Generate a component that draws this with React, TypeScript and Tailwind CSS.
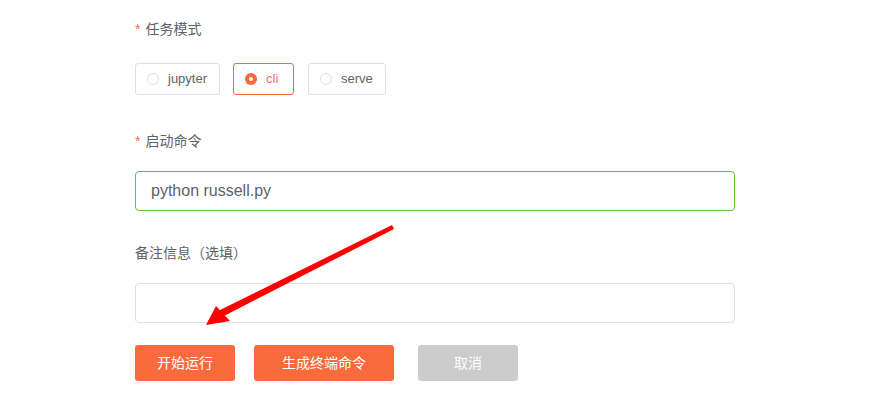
import React, { useState } from 'react';

const font = { fontFamily: '"Liberation Sans", "Noto Sans CJK SC", sans-serif' };

const modes = [
  { value: 'jupyter', w: 'w-[85px]' },
  { value: 'cli', w: 'w-[61px]' },
  { value: 'serve', w: 'w-[78px]' },
];

const Label: React.FC<{ text: string; required?: boolean }> = ({ text, required }) => (
  <div className="h-5 flex items-center text-[14px] text-[#606266] leading-5">
    {required && <span className="text-[#f56c6c] mr-[5px]">*</span>}
    {text}
  </div>
);

export default function App() {
  const [mode, setMode] = useState('cli');
  const [cmd, setCmd] = useState('python russell.py');
  const [note, setNote] = useState('');

  return (
    <div className="relative w-[881px] h-[400px] bg-white overflow-hidden" style={font}>
      <div className="pl-[135px] pt-[19px] flex flex-col">
        <Label text="任务模式" required />

        <div className="mt-[24px] flex h-8">
          {modes.map((m, i) => {
            const on = mode === m.value;
            return (
              <button
                key={m.value}
                type="button"
                onClick={() => setMode(m.value)}
                className={`${m.w} ${i === 1 ? 'ml-[13px]' : i === 2 ? 'ml-[14px]' : ''} h-8 flex items-center pl-[11px] rounded-[3px] border text-[13px] ${on ? 'border-[#f96a3c] text-[#f56c6c]' : 'border-[#dcdfe6] text-[#606266]'}`}
              >
                <span className={`w-[12px] h-[12px] rounded-full flex items-center justify-center ${on ? 'bg-[#f96a3c]' : 'border border-[#dcdfe6]'}`}>
                  {on && <span className="w-[4px] h-[4px] rounded-full bg-white" />}
                </span>
                <span className="ml-[9px]">{m.value}</span>
              </button>
            );
          })}
        </div>

        <div className="mt-[36px]">
          <Label text="启动命令" required />
        </div>
        <input
          value={cmd}
          onChange={e => setCmd(e.target.value)}
          className="mt-5 w-[600px] h-[40px] rounded-[4px] border border-[#67c23a] px-[15px] text-[16px] text-[#606266] outline-none"
          style={font}
        />

        <div className="mt-[32px]">
          <Label text="备注信息（选填）" />
        </div>
        <input
          value={note}
          onChange={e => setNote(e.target.value)}
          className="mt-5 w-[600px] h-[40px] rounded-[4px] border border-[#dcdfe6] px-[15px] text-[16px] text-[#606266] outline-none"
          style={font}
        />

        <div className="mt-[22px] flex">
          <button type="button" className="w-[100px] h-9 rounded-[3px] bg-[#f96a3c] text-white text-[14px]">开始运行</button>
          <button type="button" className="ml-[19px] w-[140px] h-9 rounded-[3px] bg-[#f96a3c] text-white text-[14px]">生成终端命令</button>
          <button type="button" className="ml-[24px] w-[100px] h-9 rounded-[3px] bg-[#cccccc] text-white text-[14px]">取消</button>
        </div>
      </div>

      {/* annotation arrow */}
      <svg className="absolute left-0 top-0 pointer-events-none" width="881" height="400">
        <polygon points="392,225 394,229 220,318 216,312" fill="#ff0000" />
        <polygon points="206,325 216,306 230,321" fill="#ff0000" />
      </svg>
    </div>
  );
}
